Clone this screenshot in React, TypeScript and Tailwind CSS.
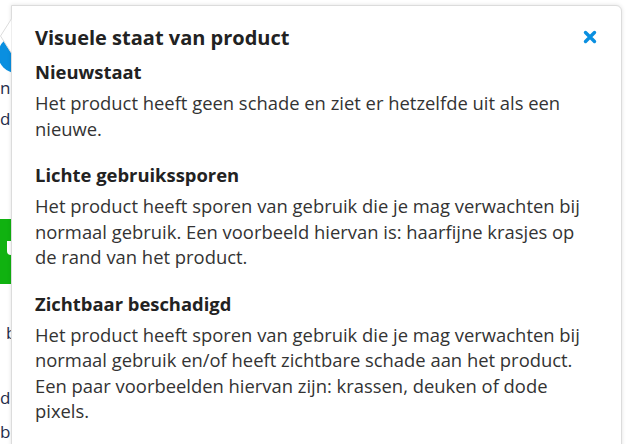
import React from 'react';

const sections = [
  {
    title: 'Nieuwstaat',
    text: 'Het product heeft geen schade en ziet er hetzelfde uit als een nieuwe.',
  },
  {
    title: 'Lichte gebruikssporen',
    text: 'Het product heeft sporen van gebruik die je mag verwachten bij normaal gebruik. Een voorbeeld hiervan is: haarfijne krasjes op de rand van het product.',
  },
  {
    title: 'Zichtbaar beschadigd',
    text: 'Het product heeft sporen van gebruik die je mag verwachten bij normaal gebruik en/of heeft zichtbare schade aan het product. Een paar voorbeelden hiervan zijn: krassen, deuken of dode pixels.',
  },
];

const App: React.FC = () => {
  return (
    <div
      className="relative w-[632px] h-[444px] overflow-hidden bg-white"
      style={{ fontFamily: '"Open Sans", "Noto Sans", sans-serif' }}
    >
      {/* Page behind the popover (only a sliver is visible) */}
      <div className="flex flex-col w-[11px] overflow-hidden text-[17px] leading-[25px] text-[#1f2d4a]">
        <div className="mt-[36px] ml-[-2px] w-[38px] h-[37px] shrink-0 rounded-full bg-[#0a8fe0]" />
        <div className="mt-[2px] whitespace-nowrap">
          <span>n</span>
          <span className="text-[#f39200]">i</span>
        </div>
        <div className="mt-[6px] whitespace-nowrap">d</div>
        <div className="mt-[88px] h-[65px] shrink-0 bg-[#10b210] relative">
          <div className="absolute right-0 top-[22px] w-[4px] h-[14px] bg-white rounded-bl-full" />
        </div>
        <div className="mt-[36px] whitespace-nowrap pl-[6px]">b</div>
        <div className="mt-[40px] whitespace-nowrap">d.</div>
        <div className="mt-[9px] whitespace-nowrap">b</div>
      </div>

      {/* Popover */}
      <div className="absolute left-[11px] top-[5px] w-[611px] h-[460px] bg-white border border-[#dcdcdc] rounded-tr-[6px] shadow-[0_0_4px_rgba(0,0,0,0.12)]">
        <svg className="absolute left-[-12px] top-[12px]" width="13" height="36" viewBox="0 0 13 36">
          <polygon points="12,0 0.5,18 12,36" fill="#ffffff" stroke="#dcdcdc" strokeWidth="1" />
          <rect x="12" y="0" width="2" height="36" fill="#ffffff" />
        </svg>

        <div className="pl-[23px] pr-[20px] pt-[18px] text-[#333]">
          <div className="flex items-start justify-between">
            <h2 className="text-[20px] leading-[28px] font-bold text-[#222]">Visuele staat van product</h2>
            <button className="mt-[6px] mr-[4px] text-[#0a8fe0]">
              <svg width="14" height="14" viewBox="0 0 14 14">
                <path d="M2.5 2.5L11.5 11.5M11.5 2.5L2.5 11.5" stroke="currentColor" strokeWidth="3.4" strokeLinecap="round" />
              </svg>
            </button>
          </div>

          <div className="mt-[7px] flex flex-col gap-[21px] w-[552px]">
            {sections.map((s) => (
              <div key={s.title}>
                <h3 className="text-[18.4px] leading-[26px] font-bold text-[#222] mb-[5px]">{s.title}</h3>
                <p className="text-[18.4px] leading-[25.5px]">{s.text}</p>
              </div>
            ))}
          </div>
        </div>
      </div>
    </div>
  );
};

export default App;
